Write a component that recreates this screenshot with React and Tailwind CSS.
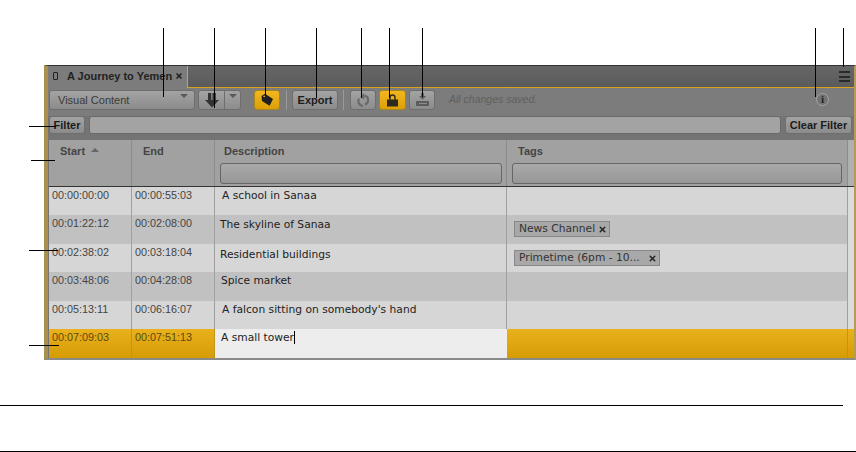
import { X } from 'lucide-react';

const rows = [
  { start: '00:00:00:00', end: '00:00:55:03', desc: 'A school in Sanaa', descClass: 'pl-[7px] pt-[1px]', height: 'h-[28px]' },
  { start: '00:01:22:12', end: '00:02:08:00', desc: 'The skyline of Sanaa', descClass: 'pl-[5px] pt-[2px]', height: 'h-[29px]', tag: 'News Channel', tagWidth: 'w-[96px]', tagTop: 'pt-[6px]' },
  { start: '00:02:38:02', end: '00:03:18:04', desc: 'Residential buildings', descClass: 'pl-[5px] pt-[3px]', height: 'h-[28px]', tag: 'Primetime (6pm - 10...', tagWidth: 'w-[146px]', tagTop: 'pt-[6px]' },
  { start: '00:03:48:06', end: '00:04:28:08', desc: 'Spice market', descClass: 'pl-[6px] pt-[1px]', height: 'h-[29px]' },
  { start: '00:05:13:11', end: '00:06:16:07', desc: "A falcon sitting on somebody's hand", descClass: 'pl-[7px] pt-[1px]', height: 'h-[28px]' },
];

const cols = 'grid grid-cols-[83px_83px_292px_341px_1fr]';
const greyBtn = 'rounded-[3px] border border-[#6e6e6e] bg-gradient-to-b from-[#a3a3a3] to-[#8c8c8c]';
const goldBtn = 'rounded-[3px] border border-[#a8861c] bg-gradient-to-b from-[#f2b71e] to-[#dc9f06]';

function Callouts() {
  return (
    <>
      <div className="absolute left-[163px] top-[28px] h-[69px] w-px bg-black" />
      <div className="absolute left-[214px] top-[28px] h-[80px] w-px bg-black" />
      <div className="absolute left-[265px] top-[28px] h-[67px] w-px bg-black" />
      <div className="absolute left-[316px] top-[28px] h-[70px] w-px bg-black" />
      <div className="absolute left-[361px] top-[28px] h-[70px] w-px bg-black" />
      <div className="absolute left-[389px] top-[28px] h-[70px] w-px bg-black" />
      <div className="absolute left-[422px] top-[28px] h-[69px] w-px bg-black" />
      <div className="absolute left-[815px] top-[28px] h-[69px] w-px bg-black" />
      <div className="absolute left-[843px] top-[28px] h-[39px] w-px bg-black" />
      <div className="absolute left-[29px] top-[126px] h-px w-[27px] bg-black" />
      <div className="absolute left-[31px] top-[160px] h-px w-[24px] bg-black" />
      <div className="absolute left-[29px] top-[250px] h-px w-[29px] bg-black" />
      <div className="absolute left-[29px] top-[345px] h-px w-[30px] bg-black" />
    </>
  );
}

function Toolbar() {
  return (
    <div className="flex h-[28px] items-start bg-[#7c7c7c] pl-[1px] pt-[2px]">
      {/* content type dropdown */}
      <div className={`relative flex h-[20px] w-[146px] items-center pl-[8px] text-[11px] text-[#3a3a3a] ${greyBtn}`}>
        Visual Content
        <div className="absolute right-[6px] top-[3px] h-0 w-0 border-x-[4px] border-t-[4px] border-x-transparent border-t-[#5a5a5a]" />
      </div>
      {/* split button */}
      <div className={`ml-[3px] flex h-[20px] w-[43px] ${greyBtn}`}>
        <div className="flex w-[26px] items-center justify-center border-r border-[#6e6e6e]">
          <svg width="16" height="16" viewBox="0 0 16 16" fill="#333">
            <path d="M4 1h3.300v8H4z" />
            <path d="M8.500 1h3.300v8H8.500z" />
            <path d="M1 8h14l-7 7.500z" />
          </svg>
        </div>
        <div className="flex flex-1 justify-center pt-[3px]">
          <div className="h-0 w-0 border-x-[4px] border-t-[4px] border-x-transparent border-t-[#5a5a5a]" />
        </div>
      </div>
      {/* tags toggle */}
      <div className={`ml-[13px] flex h-[20px] w-[26px] items-center justify-center ${goldBtn}`}>
        <svg width="14" height="14" viewBox="0 0 14 14" fill="#1f1f1f">
          <path d="M1.500 3 5 .8l8 5.200-3.400 6.800-7.600-4.800z" />
          <circle cx="4.200" cy="3.300" r="0.900" fill="#e8ab10" />
        </svg>
      </div>
      <div className="ml-[6px] h-[20px] w-px bg-[#9a9a9a]" />
      <div className={`ml-[5px] flex h-[20px] w-[46px] items-center justify-center text-[11px] font-bold text-[#1c1c1c] ${greyBtn}`}>
        Export
      </div>
      <div className="ml-[5px] h-[20px] w-px bg-[#9a9a9a]" />
      {/* refresh */}
      <div className={`ml-[6px] flex h-[20px] w-[26px] items-center justify-center ${greyBtn}`}>
        <svg width="14" height="15" viewBox="0 0 14 15" fill="none" stroke="#6a6a6a" strokeWidth="2.200">
          <path d="M8.500 2.500a4.700 4.700 0 0 1 .5 9" />
          <path d="M7 13A5 5 0 0 1 3 5.500" />
          <path d="M8 .5 4.500 3.500 8 6.500z" fill="#6a6a6a" strokeWidth="0.500" />
        </svg>
      </div>
      {/* lock toggle */}
      <div className={`ml-[3px] flex h-[20px] w-[27px] items-center justify-center ${goldBtn}`}>
        <svg width="13" height="14" viewBox="0 0 13 14">
          <path d="M4 7V4.500a2.500 2.500 0 0 1 5 0V7" fill="none" stroke="#2e2a20" strokeWidth="1.400" />
          <rect x="1" y="6.500" width="11" height="7" fill="#2e2a20" />
        </svg>
      </div>
      {/* download */}
      <div className={`ml-[3px] flex h-[20px] w-[26px] items-center justify-center ${greyBtn}`}>
        <svg width="15" height="14" viewBox="0 0 15 14" fill="#5c5c5c">
          <path d="M6.200 0h2.600v3H11L7.500 6.800 4 3h2.200z" />
          <rect x="1" y="8" width="13" height="5" />
          <rect x="4" y="10" width="8" height="1" fill="#8d8d8d" />
        </svg>
      </div>
      <span className="ml-[14px] mt-[2px] text-[10.500px] italic text-[#5f5f5f]">All changes saved.</span>
      <div className="ml-auto mr-[25px] mt-[3px] flex h-[13px] w-[13px] items-center justify-center rounded-full border border-[#a5a5a5] bg-[#737373] font-['Liberation_Serif',serif] text-[11px] font-bold leading-none text-[#222]">
        i
      </div>
    </div>
  );
}

function FilterRow() {
  return (
    <div className="flex h-[24px] gap-[4px] bg-[#747474] pl-[1px] pr-[2px]">
      <div className={`flex h-[18px] w-[36px] items-center justify-center text-[11px] font-bold text-[#1c1c1c] ${greyBtn}`}>
        Filter
      </div>
      <div className="h-[18px] flex-1 rounded-[3px] border border-[#6a6a6a] bg-[#a3a3a3]" />
      <div className={`flex h-[18px] w-[67px] items-center justify-center text-[11px] font-bold text-[#1c1c1c] ${greyBtn}`}>
        Clear Filter
      </div>
    </div>
  );
}

function TableHeader() {
  return (
    <div className={`${cols} h-[47px] shrink-0 border-b border-[#333] bg-[#a1a1a1] text-[11px] font-bold text-[#444]`}>
      <div className="flex items-start gap-[6px] border-r border-[#8c8c8c] pl-[11px] pt-[3px]">
        Start
        <div className="mt-[5px] h-0 w-0 border-x-[4px] border-b-[4px] border-x-transparent border-b-[#666]" />
      </div>
      <div className="border-r border-[#8c8c8c] pl-[11px] pt-[3px]">End</div>
      <div className="border-r border-[#8c8c8c] pl-[9px] pt-[3px]">
        Description
        <div className="ml-[-4px] mt-[3px] h-[21px] w-[282px] rounded-[3px] border border-[#666] bg-gradient-to-b from-[#a9a9a9] to-[#979797]" />
      </div>
      <div className="border-r border-[#8c8c8c] pl-[11px] pt-[3px]">
        Tags
        <div className="ml-[-6px] mt-[3px] h-[21px] w-[330px] rounded-[3px] border border-[#666] bg-gradient-to-b from-[#a9a9a9] to-[#979797]" />
      </div>
      <div className="bg-[#b0b0b0]" />
    </div>
  );
}

function Row({ row, index }) {
  const bg = index % 2 === 0 ? 'bg-[#d6d6d6]' : 'bg-[#c1c1c1]';
  return (
    <div className={`${cols} ${row.height} shrink-0 ${bg}`}>
      <div className="border-r border-[#a0a0a0] pl-[3px] text-[10.800px] text-[#444]">{row.start}</div>
      <div className="border-r border-[#a0a0a0] pl-[3px] text-[10.800px] text-[#444]">{row.end}</div>
      <div className={`border-r border-[#a0a0a0] ${row.descClass} font-['DejaVu_Sans',sans-serif] text-[10.700px] text-[#222]`}>
        {row.desc}
      </div>
      <div className={`border-r border-[#a0a0a0] pl-[7px] ${row.tagTop || ''}`}>
        {row.tag && (
          <div className={`flex h-[16px] ${row.tagWidth} items-center justify-between border border-[#888] bg-[#a8a8a8] pl-[4px] pr-[2px] font-['DejaVu_Sans',sans-serif] text-[10.700px] text-[#333]`}>
            {row.tag}
            <X size={9} strokeWidth={4} color="#222" />
          </div>
        )}
      </div>
      <div className="bg-[#dcdcdc]" />
    </div>
  );
}

function SelectedRow() {
  return (
    <div className={`${cols} h-[29px] shrink-0 bg-gradient-to-b from-[#e9b11c] to-[#d69c04]`}>
      <div className="border-r border-[#c0951c] pl-[3px] text-[10.800px] text-[#5a4a10]">00:07:09:03</div>
      <div className="border-r border-[#c0951c] pl-[3px] text-[10.800px] text-[#5a4a10]">00:07:51:13</div>
      <div className="bg-[#ededed] pl-[6px] pt-[1px] font-['DejaVu_Sans',sans-serif] text-[10.700px] text-[#222]">
        A small tower<span className="border-r border-black" />
      </div>
      <div className="border-r border-[#c0951c]" />
      <div />
    </div>
  );
}

export default function App() {
  return (
    <div className="relative h-[452px] w-[856px] overflow-hidden bg-white font-['Liberation_Sans',Arial,sans-serif]">
      <div className="flex flex-col pl-[44px] pt-[65px]">
        <div className="flex h-[295px] w-[812px] flex-col border-t border-[#333] border-l-[4px] border-l-[#a8914f] border-b-[2px] border-b-[#8a8a8a] border-r-[2px] border-r-[#b59c55] bg-[#747474]">
          {/* tab strip */}
          <div className="flex h-[22px] shrink-0 bg-gradient-to-b from-[#666] to-[#5a5a5a]">
            <div className="flex w-[140px] items-center gap-[9px] border-r border-[#d8a520] bg-[#7c7c7c] pb-[2px] pl-[5px] text-[11px] font-bold text-[#222]">
              <div className="h-[8px] w-[5px] rounded-[1px] border border-[#222]" />
              <span>A Journey to Yemen</span>
              <X size={8} strokeWidth={5} color="#222" className="-ml-[6px]" />
            </div>
            <div className="flex flex-1 items-center justify-end border-b border-[#d8a520] pr-[4px]">
              <div className="flex h-[11px] w-[11px] flex-col justify-between">
                <div className="h-[2px] bg-[#2a2a2a]" />
                <div className="h-[2px] bg-[#2a2a2a]" />
                <div className="h-[2px] bg-[#2a2a2a]" />
              </div>
            </div>
          </div>
          <Toolbar />
          <FilterRow />
          <div className="flex flex-1 flex-col pl-[1px]">
            <TableHeader />
            {rows.map((row, i) => (
              <Row key={row.start} row={row} index={i} />
            ))}
            <SelectedRow />
          </div>
        </div>
        <div className="-ml-[44px] mt-[45px] h-px w-[843px] bg-black" />
        <div className="-ml-[44px] mt-[45px] h-px w-[856px] bg-black" />
      </div>
      <Callouts />
    </div>
  );
}
